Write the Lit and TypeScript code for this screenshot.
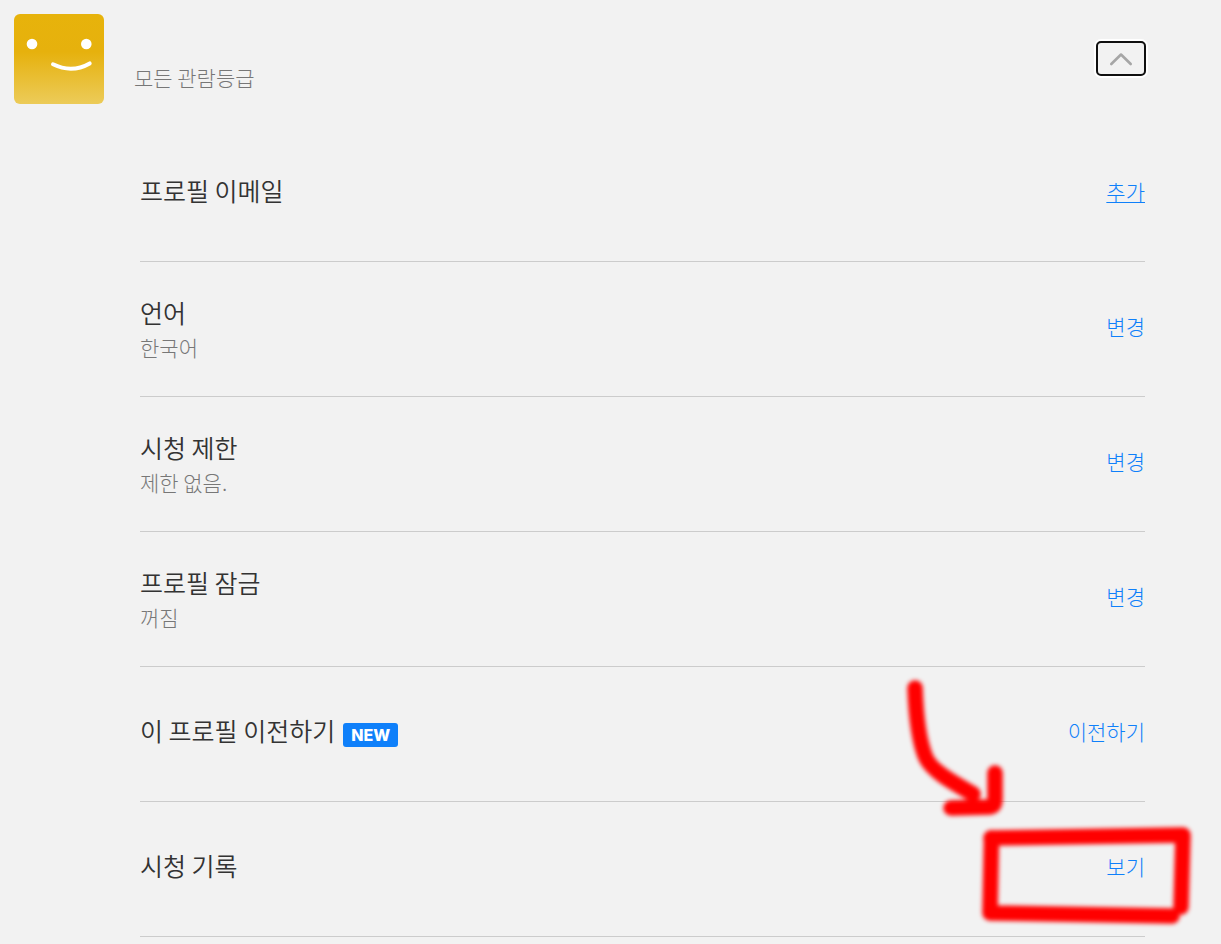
import { LitElement, html, css, nothing } from "lit";
import { customElement, property, state } from "lit/decorators.js";

interface Setting {
  id: string;
  label: string;
  value?: string;
  action: string;
  underlined?: boolean;
  badge?: string;
  marked?: boolean;
}

const SETTINGS: Setting[] = [
  { id: "email", label: "프로필 이메일", action: "추가", underlined: true },
  { id: "language", label: "언어", value: "한국어", action: "변경" },
  { id: "restrictions", label: "시청 제한", value: "제한 없음.", action: "변경" },
  { id: "lock", label: "프로필 잠금", value: "꺼짐", action: "변경" },
  { id: "transfer", label: "이 프로필 이전하기", action: "이전하기", badge: "NEW" },
  { id: "history", label: "시청 기록", action: "보기", marked: true },
];

@customElement("profile-header")
export class ProfileHeader extends LitElement {
  @property({ type: Boolean }) open = true;

  static styles = css`
    :host {
      display: block;
    }
    .header {
      display: flex;
      align-items: flex-start;
      padding: 14px 75px 23px 14px;
    }
    .avatar {
      display: block;
      flex: none;
      width: 90px;
      height: 90px;
      border-radius: 6px;
    }
    .rating {
      flex: 1;
      margin: 0;
      padding: 48px 0 0 30px;
      font-size: 21px;
      font-weight: 300;
      line-height: 30px;
      color: #777;
    }
    .toggle {
      display: flex;
      align-items: center;
      justify-content: center;
      width: 50px;
      height: 35px;
      margin: 27px 0 0;
      padding: 0;
      border: 2px solid #101010;
      border-radius: 5px;
      background: transparent;
      box-shadow: 0 0 0 2px #fff;
      cursor: pointer;
    }
    .closed {
      transform: rotate(180deg);
    }
  `;

  private toggle() {
    this.dispatchEvent(new CustomEvent("toggle-settings", { bubbles: true, composed: true }));
  }

  render() {
    return html`
      <header class="header">
        <svg class="avatar" viewBox="0 0 90 90" role="img" aria-label="프로필">
          <defs>
            <linearGradient id="face" x1="0" y1="0" x2="0" y2="1">
              <stop offset="0" stop-color="#e7b30b" />
              <stop offset="0.42" stop-color="#e6b10d" />
              <stop offset="1" stop-color="#eccb59" />
            </linearGradient>
          </defs>
          <rect width="90" height="90" fill="url(#face)" />
          <circle cx="18" cy="30" r="5.3" fill="#fff" />
          <circle cx="72.3" cy="30" r="5.3" fill="#fff" />
          <path d="M39 50.3 Q58 59.5 75.7 49.4" fill="none" stroke="#fff" stroke-width="4" stroke-linecap="round" />
        </svg>
        <p class="rating">모든 관람등급</p>
        <button
          class="toggle"
          type="button"
          aria-label="프로필 설정"
          aria-expanded=${this.open ? "true" : "false"}
          @click=${this.toggle}
        >
          <svg class=${this.open ? "" : "closed"} width="24" height="14" viewBox="0 0 24 14" aria-hidden="true">
            <path d="M2.3 12 L12 2.5 L21.7 12" fill="none" stroke="#a6a6a6" stroke-width="2.6" stroke-linecap="round" stroke-linejoin="round" />
          </svg>
        </button>
      </header>
    `;
  }
}

@customElement("setting-row")
export class SettingRow extends LitElement {
  @property({ attribute: false }) setting!: Setting;

  static styles = css`
    :host {
      display: block;
    }
    .row {
      position: relative;
      box-sizing: border-box;
      display: flex;
      align-items: center;
      justify-content: space-between;
      min-height: 135px;
      padding-bottom: 4px;
      border-bottom: 1px solid #ccc;
    }
    .label {
      display: flex;
      align-items: center;
      gap: 8px;
      margin: 0;
      padding-bottom: 4px;
      font-size: 25px;
      font-weight: 350;
      line-height: 36px;
      color: #333;
    }
    .value {
      margin: 0;
      font-size: 21px;
      font-weight: 300;
      line-height: 26px;
      color: #777;
    }
    .badge {
      margin-top: 10px;
      padding: 0 8px;
      border-radius: 3px;
      background: #0f80fa;
      color: #fff;
      font-family: Inter, "Liberation Sans", sans-serif;
      font-size: 16px;
      font-weight: 800;
      line-height: 24px;
    }
    .action {
      padding-bottom: 3px;
      color: #0f80fa;
      font-size: 21px;
      font-weight: 300;
      line-height: 30px;
      text-decoration: none;
    }
    .action:hover,
    .underlined {
      text-decoration: underline;
      text-decoration-thickness: 1px;
      text-underline-offset: 2px;
    }
    .mark {
      position: absolute;
      top: -142px;
      right: -76px;
      width: 331px;
      height: 284px;
      pointer-events: none;
    }
  `;

  /* Hand-drawn marker: an arrow leading to a box around the action. */
  private renderMark() {
    return html`
      <svg class="mark" viewBox="0 0 331 284" aria-hidden="true">
        <defs>
          <filter id="soft" x="-10%" y="-10%" width="120%" height="120%" color-interpolation-filters="sRGB">
            <feGaussianBlur stdDeviation="2.1" />
          </filter>
        </defs>
        <g fill="none" stroke="#f00" stroke-width="15.5" stroke-linecap="round" stroke-linejoin="round" filter="url(#soft)">
          <path d="M25 28 C26 55 29 82 36 98 C42 111 62 122 83 134" />
          <path d="M61 148 L100 147 Q105 146 105 139 L105 113" />
          <path d="M101 178 L293 175 L291 247" />
          <path d="M101.500 178 L100 253 L282 256" />
        </g>
      </svg>
    `;
  }

  render() {
    const s = this.setting;
    return html`
      <div class="row">
        <div>
          <h3 class="label" id="label">
            <span>${s.label}</span>
            ${s.badge ? html`<span class="badge">${s.badge}</span>` : nothing}
          </h3>
          ${s.value ? html`<p class="value">${s.value}</p>` : nothing}
        </div>
        <a
          class=${s.underlined ? "action underlined" : "action"}
          id="action"
          href="#${s.id}"
          aria-labelledby="label action"
          >${s.action}</a
        >
        ${s.marked ? this.renderMark() : nothing}
      </div>
    `;
  }
}

@customElement("app-root")
export class AppRoot extends LitElement {
  @state() private open = true;

  static styles = css`
    :host {
      display: block;
      min-height: 100vh;
      background: #f2f2f2;
      font-family: "Noto Sans CJK KR", sans-serif;
    }
    .settings {
      margin: 0 76px 0 140px;
    }
  `;

  render() {
    return html`
      <main>
        <profile-header
          ?open=${this.open}
          @toggle-settings=${() => (this.open = !this.open)}
        ></profile-header>
        ${this.open
          ? html`<section class="settings" aria-label="프로필 설정">
              ${SETTINGS.map((s) => html`<setting-row .setting=${s}></setting-row>`)}
            </section>`
          : nothing}
      </main>
    `;
  }
}
